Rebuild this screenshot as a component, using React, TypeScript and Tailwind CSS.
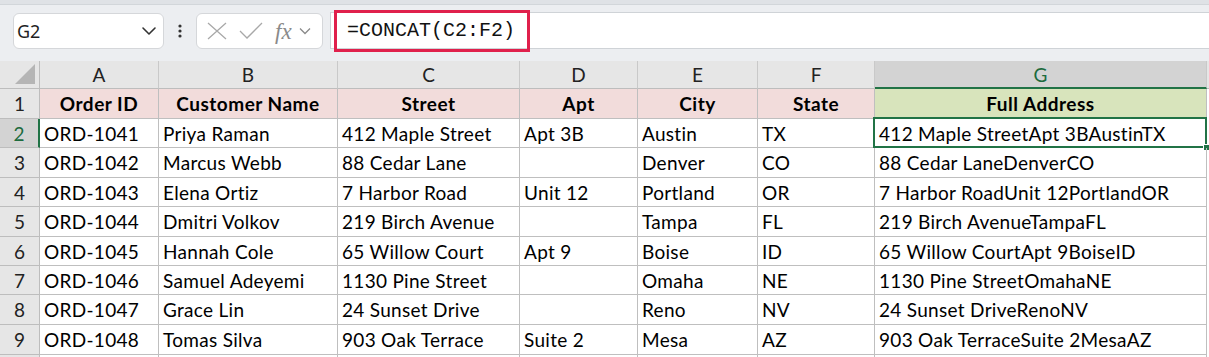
import React from "react";

const cols = [
  { key: "A", w: 119 },
  { key: "B", w: 179 },
  { key: "C", w: 182 },
  { key: "D", w: 118 },
  { key: "E", w: 120 },
  { key: "F", w: 117 },
  { key: "G", w: 332 },
];

const headers = ["Order ID", "Customer Name", "Street", "Apt", "City", "State", "Full Address"];

const data: string[][] = [
  ["ORD-1041", "Priya Raman", "412 Maple Street", "Apt 3B", "Austin", "TX", "412 Maple StreetApt 3BAustinTX"],
  ["ORD-1042", "Marcus Webb", "88 Cedar Lane", "", "Denver", "CO", "88 Cedar LaneDenverCO"],
  ["ORD-1043", "Elena Ortiz", "7 Harbor Road", "Unit 12", "Portland", "OR", "7 Harbor RoadUnit 12PortlandOR"],
  ["ORD-1044", "Dmitri Volkov", "219 Birch Avenue", "", "Tampa", "FL", "219 Birch AvenueTampaFL"],
  ["ORD-1045", "Hannah Cole", "65 Willow Court", "Apt 9", "Boise", "ID", "65 Willow CourtApt 9BoiseID"],
  ["ORD-1046", "Samuel Adeyemi", "1130 Pine Street", "", "Omaha", "NE", "1130 Pine StreetOmahaNE"],
  ["ORD-1047", "Grace Lin", "24 Sunset Drive", "", "Reno", "NV", "24 Sunset DriveRenoNV"],
  ["ORD-1048", "Tomas Silva", "903 Oak Terrace", "Suite 2", "Mesa", "AZ", "903 Oak TerraceSuite 2MesaAZ"],
];

const rowHeights = [30, 29, 30, 29, 30, 29, 29, 30, 30, 20];

const gridCols = "grid-cols-[40px_119px_179px_182px_118px_120px_117px_332px_2px]";

export default function App() {
  return (
    <div
      className="w-[1209px] h-[357px] overflow-hidden bg-white text-[#000]"
      style={{ fontFamily: "Lato, 'Noto Sans', sans-serif" }}
    >
      {/* top strip */}
      <div className="h-[5px] bg-[#dfe2e6] border-b border-[#d2d6da]" />
      {/* formula bar */}
      <div className="h-[56px] bg-[#eceef1] flex items-start pt-[8px]">
        <div
          className="ml-[13px] w-[151px] h-[36px] rounded-[6px] border border-[#d5d7da] bg-white flex items-center justify-between pl-[3px] pr-[6px]"
          style={{ fontFamily: "'Noto Sans', sans-serif" }}
        >
          <span className="text-[18px] text-[#1f1f1f]">G2</span>
          <svg width="16" height="10" viewBox="0 0 16 10" fill="none">
            <path d="M2 2 L8 8 L14 2" stroke="#333" strokeWidth="1.6" strokeLinecap="round" strokeLinejoin="round" />
          </svg>
        </div>
        <div className="w-[32px] h-[36px] flex items-center justify-center">
          <svg width="4" height="14" viewBox="0 0 4 14">
            <circle cx="2" cy="2" r="1.6" fill="#333" />
            <circle cx="2" cy="7" r="1.6" fill="#333" />
            <circle cx="2" cy="12" r="1.6" fill="#333" />
          </svg>
        </div>
        <div className="w-[127px] h-[36px] rounded-[6px] border border-[#d5d7da] bg-white flex items-center pl-[8px]">
          <svg width="22" height="18" viewBox="0 0 22 18" fill="none" className="ml-[1px]">
            <path d="M2 1 L20 17 M20 1 L2 17" stroke="#a8a8a8" strokeWidth="1.3" />
          </svg>
          <svg width="24" height="18" viewBox="0 0 24 18" fill="none" className="ml-[11px]">
            <path d="M1 9 L8 16 L23 1" stroke="#a8a8a8" strokeWidth="1.3" />
          </svg>
          <span
            className="ml-[12px] text-[23px] italic text-[#8a8a8a] leading-none"
            style={{ fontFamily: "'Liberation Serif', serif" }}
          >
            fx
          </span>
          <svg width="12" height="8" viewBox="0 0 12 8" fill="none" className="ml-[7px]">
            <path d="M1 1.5 L6 6.5 L11 1.5" stroke="#8a8a8a" strokeWidth="1.3" />
          </svg>
        </div>
        <div className="ml-[7px] flex-1 h-[37px] -mt-[1px] bg-white border-y border-l border-[#cfd3d7] relative flex items-center">
          <div className="absolute left-[3px] -top-[3px] w-[196px] h-[42px] border-[3px] border-[#e0204c]" />
          <span
            className="ml-[16px] text-[20px] text-[#111]"
            style={{ fontFamily: "'Liberation Mono', monospace" }}
          >
            =CONCAT(C2:F2)
          </span>
        </div>
      </div>

      {/* sheet */}
      <div className={`grid ${gridCols}`}>
        {/* column header row */}
        <div className="h-[28px] bg-[#e6e6e6] border-r border-b border-[#bdbdbd] flex items-end justify-end pr-[4px] pb-[4px]">
          <svg width="20" height="20" viewBox="0 0 20 20">
            <path d="M20 0 L20 20 L0 20 Z" fill="#b5b5b5" />
          </svg>
        </div>
        {cols.map((c) => {
          const sel = c.key === "G";
          return (
            <div
              key={c.key}
              className={`h-[28px] flex items-center justify-center pt-[2px] text-[19px] border-r border-[#c9c9c9] ${
                sel
                  ? "bg-[#d3d3d3] text-[#1d6b3e] border-b-2 border-b-[#217346]"
                  : "bg-[#e6e6e6] text-[#222] border-b border-b-[#bdbdbd]"
              }`}
            >
              {c.key}
            </div>
          );
        })}
        <div className="h-[28px] bg-[#e6e6e6] border-b border-[#bdbdbd]" />

        {/* row 1: headers */}
        <div className="h-[30px] bg-[#e6e6e6] border-r border-b border-[#bdbdbd] flex items-center justify-center pt-[2px] text-[19px] text-[#222]">
          1
        </div>
        {headers.map((h, i) => (
          <div
            key={h}
            className={`h-[30px] flex items-center justify-center pt-[2px] font-bold text-[19px] tracking-[0.5px] border-r border-b border-[#bfbfbf] ${
              i === 6 ? "bg-[#d8e4bc]" : "bg-[#f2dcdb]"
            }`}
          >
            {h}
          </div>
        ))}
        <div className="h-[30px]" />

        {/* data rows */}
        {data.map((row, r) => {
          const h = rowHeights[r + 1];
          const selRow = r === 0;
          return (
            <React.Fragment key={r}>
              <div
                className={`flex items-center justify-center pt-[2px] text-[19px] border-b border-[#bdbdbd] ${
                  selRow
                    ? "bg-[#d3d3d3] text-[#1d6b3e] border-r-2 border-r-[#217346]"
                    : "bg-[#e6e6e6] text-[#222] border-r border-r-[#bdbdbd]"
                }`}
                style={{ height: h }}
              >
                {r + 2}
              </div>
              {row.map((v, ci) => {
                const isSel = selRow && ci === 6;
                return (
                  <div
                    key={ci}
                    className="relative flex items-center pl-[4px] pt-[2px] text-[19px] tracking-[0.3px] whitespace-nowrap border-r border-b border-[#bfbfbf]"
                    style={{ height: h }}
                  >
                    {v}
                    {isSel && (
                      <>
                        <div className="absolute -left-[2px] -top-[2px] -right-[1px] -bottom-[1px] border-2 border-[#217346]" />
                        <div className="absolute -right-[4px] -bottom-[4px] w-[7px] h-[7px] bg-[#217346] border border-white" />
                      </>
                    )}
                  </div>
                );
              })}
              <div style={{ height: h }} />
            </React.Fragment>
          );
        })}
        <div className="h-[20px] bg-[#e6e6e6] border-r border-[#bdbdbd]" />
        {cols.map((c) => (
          <div key={c.key} className="h-[20px] border-r border-[#bfbfbf]" />
        ))}
      </div>
    </div>
  );
}
